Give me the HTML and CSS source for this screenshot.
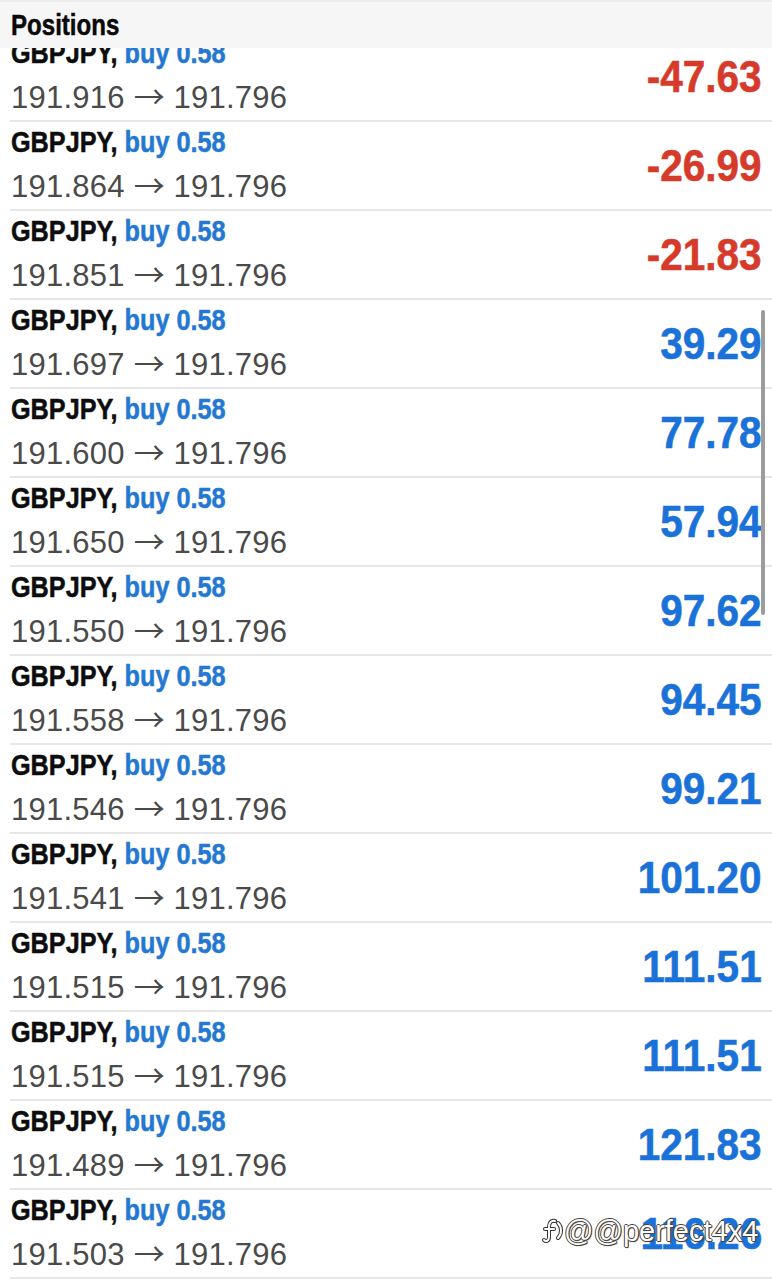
FILE: index.html
```html
<!DOCTYPE html>
<html>
<head>
<meta charset="utf-8">
<link rel="stylesheet" href="styles.css">
</head>
<body>
<div class="screen">
  <div class="header"><div class="title">Positions</div></div>
  <div class="viewport">
  <div class="list">
    <div class="row"><div class="info"><div class="pair">GBPJPY, <span class="side">buy 0.58</span></div><div class="prices">191.916 <span class="arrow">→</span> 191.796</div></div><div class="profit loss">-47.63</div></div>
    <div class="row"><div class="info"><div class="pair">GBPJPY, <span class="side">buy 0.58</span></div><div class="prices">191.864 <span class="arrow">→</span> 191.796</div></div><div class="profit loss">-26.99</div></div>
    <div class="row"><div class="info"><div class="pair">GBPJPY, <span class="side">buy 0.58</span></div><div class="prices">191.851 <span class="arrow">→</span> 191.796</div></div><div class="profit loss">-21.83</div></div>
    <div class="row"><div class="info"><div class="pair">GBPJPY, <span class="side">buy 0.58</span></div><div class="prices">191.697 <span class="arrow">→</span> 191.796</div></div><div class="profit">39.29</div></div>
    <div class="row"><div class="info"><div class="pair">GBPJPY, <span class="side">buy 0.58</span></div><div class="prices">191.600 <span class="arrow">→</span> 191.796</div></div><div class="profit">77.78</div></div>
    <div class="row"><div class="info"><div class="pair">GBPJPY, <span class="side">buy 0.58</span></div><div class="prices">191.650 <span class="arrow">→</span> 191.796</div></div><div class="profit">57.94</div></div>
    <div class="row"><div class="info"><div class="pair">GBPJPY, <span class="side">buy 0.58</span></div><div class="prices">191.550 <span class="arrow">→</span> 191.796</div></div><div class="profit">97.62</div></div>
    <div class="row"><div class="info"><div class="pair">GBPJPY, <span class="side">buy 0.58</span></div><div class="prices">191.558 <span class="arrow">→</span> 191.796</div></div><div class="profit">94.45</div></div>
    <div class="row"><div class="info"><div class="pair">GBPJPY, <span class="side">buy 0.58</span></div><div class="prices">191.546 <span class="arrow">→</span> 191.796</div></div><div class="profit">99.21</div></div>
    <div class="row"><div class="info"><div class="pair">GBPJPY, <span class="side">buy 0.58</span></div><div class="prices">191.541 <span class="arrow">→</span> 191.796</div></div><div class="profit">101.20</div></div>
    <div class="row"><div class="info"><div class="pair">GBPJPY, <span class="side">buy 0.58</span></div><div class="prices">191.515 <span class="arrow">→</span> 191.796</div></div><div class="profit">111.51</div></div>
    <div class="row"><div class="info"><div class="pair">GBPJPY, <span class="side">buy 0.58</span></div><div class="prices">191.515 <span class="arrow">→</span> 191.796</div></div><div class="profit">111.51</div></div>
    <div class="row"><div class="info"><div class="pair">GBPJPY, <span class="side">buy 0.58</span></div><div class="prices">191.489 <span class="arrow">→</span> 191.796</div></div><div class="profit">121.83</div></div>
    <div class="row"><div class="info"><div class="pair">GBPJPY, <span class="side">buy 0.58</span></div><div class="prices">191.503 <span class="arrow">→</span> 191.796</div></div><div class="profit">116.26</div></div>
  </div>
  </div>
  <div class="scrollbar"></div>
  <div class="watermark">
    <svg class="wm-icon" width="22" height="28" viewBox="0 0 22 28">
      <g fill="none" stroke-linecap="round" stroke-linejoin="round">
        <g stroke="#333" stroke-width="4">
          <path d="M13 4 C9 3 7 6 7 10 L7 20 C7 24 4 25 2 23"/>
          <path d="M3 12 H12"/>
          <path d="M16 6 C20 10 20 17 16 21"/>
        </g>
        <g stroke="#fff" stroke-width="2">
          <path d="M13 4 C9 3 7 6 7 10 L7 20 C7 24 4 25 2 23"/>
          <path d="M3 12 H12"/>
          <path d="M16 6 C20 10 20 17 16 21"/>
        </g>
      </g>
    </svg>
    <span class="wm-text">@@perfect4x4</span>
  </div>
</div>
</body>
</html>
```

FILE: styles.css
```css
html, body {
  margin: 0;
  padding: 0;
  background: #fff;
}

body {
  font-family: "Liberation Sans", Arial, sans-serif;
}

.screen {
  position: relative;
  width: 772px;
  height: 1280px;
  overflow: hidden;
  background: #fff;
}

.header {
  height: 48px;
  box-sizing: border-box;
  padding: 8px 0 0 11px;
  background: #f6f6f6;
  border-top: 2px solid #ececec;
}

.title {
  display: inline-block;
  font-weight: bold;
  font-size: 29px;
  line-height: 30px;
  color: #0a0a0a;
  -webkit-text-stroke: 0.5px #0a0a0a;
  transform: scaleX(0.83);
  transform-origin: left center;
}

.viewport {
  height: 1232px;
  overflow: hidden;
}

.list {
  margin-top: -15px;
}

.row {
  display: flex;
  justify-content: space-between;
  align-items: center;
  height: 87px;
  margin-left: 10px;
  padding: 0 10px 0 1px;
  border-bottom: 2px solid #e6e6e6;
}

.info {
  align-self: flex-start;
  padding-top: 5px;
}

.pair {
  font-weight: bold;
  font-size: 29px;
  line-height: 30px;
  color: #0d0d0d;
  white-space: nowrap;
  -webkit-text-stroke: 0.5px currentColor;
  transform: scaleX(0.87);
  transform-origin: left center;
}

.side {
  color: #2478d2;
  -webkit-text-stroke: 0.5px #2478d2;
}

.prices {
  margin-top: 10px;
  font-size: 31px;
  line-height: 34px;
  letter-spacing: 0.25px;
  color: #4a4a4a;
  white-space: nowrap;
}

.arrow {
  font-family: "Noto Sans CJK JP", "DejaVu Sans", sans-serif;
  font-size: 31px;
  line-height: 34px;
  letter-spacing: 0;
}

.profit {
  font-weight: bold;
  font-size: 45px;
  line-height: 45px;
  color: #1a72d9;
  -webkit-text-stroke: 0.6px currentColor;
  transform: scaleX(0.9);
  transform-origin: right center;
}

.profit.loss {
  color: #d63a2b;
}

.scrollbar {
  position: absolute;
  left: 761px;
  top: 310px;
  width: 4px;
  height: 305px;
  border-radius: 2px;
  background: #9c9c9c;
}

.watermark {
  position: absolute;
  left: 542px;
  top: 1214px;
  display: flex;
  align-items: center;
}

.wm-text {
  font-family: "Liberation Sans", Arial, sans-serif;
  font-size: 29px;
  line-height: 34px;
  color: #fff;
  text-shadow: 1px 0 0 #444, -1px 0 0 #444, 0 1px 0 #444, 0 -1px 0 #444, 1px 1px 1px #333;
}
```
